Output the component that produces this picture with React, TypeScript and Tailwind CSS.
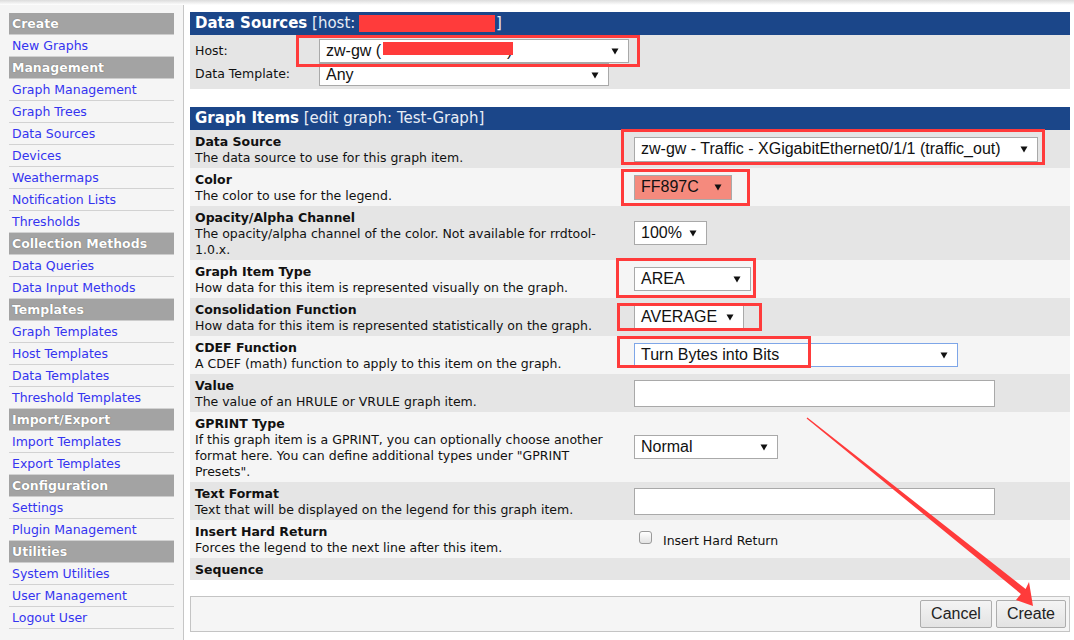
import React from "react";

const menu = [
  { head: "Create", links: ["New Graphs"] },
  {
    head: "Management",
    links: [
      "Graph Management",
      "Graph Trees",
      "Data Sources",
      "Devices",
      "Weathermaps",
      "Notification Lists",
      "Thresholds",
    ],
  },
  { head: "Collection Methods", links: ["Data Queries", "Data Input Methods"] },
  {
    head: "Templates",
    links: ["Graph Templates", "Host Templates", "Data Templates", "Threshold Templates"],
  },
  { head: "Import/Export", links: ["Import Templates", "Export Templates"] },
  { head: "Configuration", links: ["Settings", "Plugin Management"] },
  { head: "Utilities", links: ["System Utilities", "User Management", "Logout User"] },
];

const Caret = () => (
  <svg width="8" height="8" viewBox="0 0 8 8" className="shrink-0">
    <path d="M0.5 1.5H7.5L4 7.5Z" fill="#111" />
  </svg>
);

const Select = ({ className, children }: { className: string; children?: React.ReactNode }) => (
  <div
    className={`flex items-center justify-between border pl-[6px] pr-[9px] font-['Liberation_Sans',Arial,sans-serif] text-[16px] text-[#111] ${className}`}
  >
    <span className="whitespace-nowrap">{children}</span>
    <Caret />
  </div>
);

const TextBox = () => <div className="w-[361px] h-[27px] border border-[#a9a9a9] bg-white" />;

const items: { title: string; desc?: string; control?: React.ReactNode }[] = [
  {
    title: "Data Source",
    desc: "The data source to use for this graph item.",
    control: (
      <Select className="w-[404px] h-[25px] border-[#a9a9a9] bg-white">
        zw-gw - Traffic - XGigabitEthernet0/1/1 (traffic_out)
      </Select>
    ),
  },
  {
    title: "Color",
    desc: "The color to use for the legend.",
    control: <Select className="w-[98px] h-[25px] border-[#a9a9a9] bg-[#f58a7d]">FF897C</Select>,
  },
  {
    title: "Opacity/Alpha Channel",
    desc: "The opacity/alpha channel of the color. Not available for rrdtool-1.0.x.",
    control: <Select className="w-[73px] h-[24px] border-[#a9a9a9] bg-white">100%</Select>,
  },
  {
    title: "Graph Item Type",
    desc: "How data for this item is represented visually on the graph.",
    control: <Select className="w-[117px] h-[24px] border-[#a9a9a9] bg-white">AREA</Select>,
  },
  {
    title: "Consolidation Function",
    desc: "How data for this item is represented statistically on the graph.",
    control: <Select className="w-[110px] h-[24px] border-[#a9a9a9] bg-white">AVERAGE</Select>,
  },
  {
    title: "CDEF Function",
    desc: "A CDEF (math) function to apply to this item on the graph.",
    control: (
      <Select className="w-[324px] h-[24px] border-[#7ea6e8] bg-white">Turn Bytes into Bits</Select>
    ),
  },
  {
    title: "Value",
    desc: "The value of an HRULE or VRULE graph item.",
    control: <TextBox />,
  },
  {
    title: "GPRINT Type",
    desc: 'If this graph item is a GPRINT, you can optionally choose another format here. You can define additional types under "GPRINT Presets".',
    control: <Select className="w-[144px] h-[24px] border-[#a9a9a9] bg-white">Normal</Select>,
  },
  {
    title: "Text Format",
    desc: "Text that will be displayed on the legend for this graph item.",
    control: <TextBox />,
  },
  {
    title: "Insert Hard Return",
    desc: "Forces the legend to the next line after this item.",
    control: (
      <div className="flex items-center">
        <div className="ml-[5px] mt-[-3px] w-[13px] h-[13px] rounded-[3px] border border-[#9a9a9a] bg-linear-to-b from-white to-[#e2e2e2]" />
        <span className="ml-[11px] mt-[4px] text-[12.5px] text-[#111]">Insert Hard Return</span>
      </div>
    ),
  },
  { title: "Sequence" },
];

const SideBar = () => (
  <div className="w-[184px] shrink-0 bg-[#f5f5f5] border-r border-[#c6c6c6] pt-[8px] pl-[9px] pr-[9px]">
    {menu.map((group) => (
      <div key={group.head}>
        <div className="h-[22px] leading-[21px] pl-[3px] bg-[#a3a3a3] border-b border-[#cdcdcd] text-white font-bold text-[12.5px] [text-shadow:0_0_1px_#555]">
          {group.head}
        </div>
        {group.links.map((link) => (
          <div
            key={link}
            className="h-[22px] leading-[21px] pl-[3px] border-b border-[#d2d2d2] text-[#3434f0] text-[12.5px]"
          >
            {link}
          </div>
        ))}
      </div>
    ))}
  </div>
);

const Header = ({ bold, rest, children }: { bold: string; rest: string; children?: React.ReactNode }) => (
  <div className="h-[23px] leading-[23px] pl-[5px] bg-[#1b4689] text-white text-[15px] whitespace-nowrap">
    <span className="font-bold">{bold}</span>
    <span className="text-[#e8edf6]"> {rest}</span>
    {children}
  </div>
);

export default function App() {
  return (
    <div className="relative w-[1074px] h-[640px] overflow-hidden bg-white font-['DejaVu_Sans',Verdana,sans-serif] text-[#111]">
      <div className="h-[5px] bg-linear-to-b from-[#dcdcdc] to-white" />
      <div className="flex h-[635px]">
        <SideBar />
        <div className="flex-1 pt-[7px] pl-[6px] pr-[4px]">
          {/* Data Sources panel */}
          <div>
            <Header bold="Data Sources" rest="[host: ">
              <span className="inline-block w-[136px]" />
              <span className="text-[#e8edf6]">]</span>
            </Header>
            <div className="bg-[#e5e5e5] pt-[4px] pb-[3px] pl-[5px] text-[12.5px]">
              <div className="flex items-center">
                <div className="w-[124px]">Host:</div>
                <Select className="w-[310px] h-[24px] border-[#a9a9a9] bg-white">
                  zw-gw (<span className="inline-block w-[126px]" />)
                </Select>
              </div>
              <div className="flex items-center">
                <div className="w-[124px]">Data Template:</div>
                <Select className="w-[290px] h-[23px] border-[#a9a9a9] bg-white">Any</Select>
              </div>
            </div>
          </div>

          {/* Graph Items panel */}
          <div className="mt-[18px]">
            <Header bold="Graph Items" rest="[edit graph: Test-Graph]" />
            {items.map((item, i) => (
              <div
                key={item.title}
                className={`flex ${i % 2 === 0 ? "bg-[#e5e5e5]" : "bg-[#f5f5f5]"}`}
              >
                <div className="w-[444px] shrink-0 pl-[5px] pr-[16px] pt-[4px] pb-[2px] text-[12.5px] leading-[16px]">
                  <div className="font-bold">{item.title}</div>
                  {item.desc && <div>{item.desc}</div>}
                </div>
                <div className="flex-1 flex items-center">{item.control}</div>
              </div>
            ))}
          </div>

          <div className="mt-[16px] flex justify-end gap-[4px] border border-[#c4c4c4] bg-[#f5f5f5] py-[3px] pr-[3px]">
            {["Cancel", "Create"].map((b) => (
              <button
                key={b}
                className={`h-[28px] ${b === "Cancel" ? "w-[72px]" : "w-[70px]"} rounded-[2px] border border-[#adadad] bg-linear-to-b from-[#f4f4f4] to-[#e3e3e3] font-['Liberation_Sans',Arial,sans-serif] text-[16px] text-[#222]`}
              >
                {b}
              </button>
            ))}
          </div>
        </div>
      </div>

      {/* annotations drawn over the screenshot */}
      <div className="pointer-events-none absolute inset-0">
        <div className="absolute left-[359px] top-[15px] w-[136px] h-[17px] bg-[#ff3b3b]" />
        <div className="absolute left-[383px] top-[42px] w-[130px] h-[13px] bg-[#ff3b3b]" />
        <div className="absolute left-[296px] top-[35px] w-[344px] h-[32px] border-[3px] border-[#ff3b3b]" />
        <div className="absolute left-[621px] top-[129px] w-[424px] h-[36px] border-[3px] border-[#ff3b3b]" />
        <div className="absolute left-[621px] top-[169px] w-[129px] h-[37px] border-[3px] border-[#ff3b3b]" />
        <div className="absolute left-[616px] top-[258px] w-[140px] h-[40px] border-[3px] border-[#ff3b3b]" />
        <div className="absolute left-[617px] top-[303px] w-[145px] h-[28px] border-[3px] border-[#ff3b3b]" />
        <div className="absolute left-[617px] top-[336px] w-[194px] h-[32px] border-[3px] border-[#ff3b3b]" />
        <svg className="absolute left-0 top-0" width="1074" height="640" viewBox="0 0 1074 640">
          <polygon
            points="806.6,418.5 1020.9,593.9 1016,600 1033,606 1029,582 1025.6,589.1 807.4,417.5"
            fill="#ff3b3b"
          />
        </svg>
      </div>
    </div>
  );
}
